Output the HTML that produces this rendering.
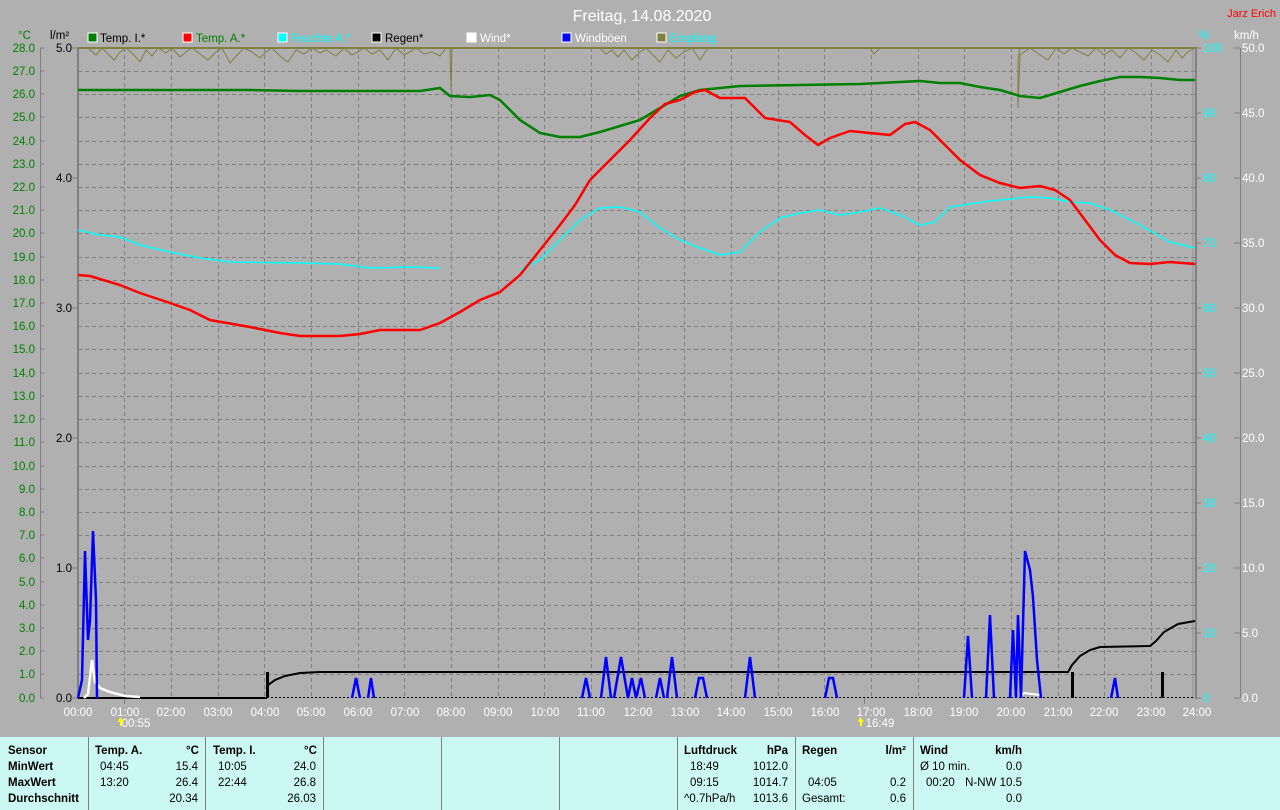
<!DOCTYPE html>
<html><head><meta charset="utf-8"><style>
body{margin:0;width:1280px;height:810px;background:#b0b0b0;overflow:hidden;font-family:"Liberation Sans",sans-serif;}
svg{position:absolute;left:0;top:0}
#tbl{position:absolute;left:0;top:737px;width:1280px;height:73px;background:#ccf8f4;font-size:11.5px;color:#000}
.c{position:absolute;top:0;height:73px;border-left:1px solid #808080}
.t{position:absolute;white-space:nowrap}
.b{font-weight:bold}
</style></head><body>
<svg width="1280" height="737" font-family="Liberation Sans, sans-serif" font-size="11.5">
<text x="642" y="21" fill="#fff" font-size="16" text-anchor="middle">Freitag, 14.08.2020</text>
<text x="1276" y="17" fill="#f00" font-size="11" text-anchor="end">Jarz Erich</text>
<!-- legend -->
<g font-size="11.5">
<rect x="88" y="33" width="9" height="9" fill="#008000" stroke="#fff"/><text x="100" y="42" fill="#000">Temp. I.*</text>
<rect x="183" y="33" width="9" height="9" fill="#f00" stroke="#fff"/><text x="196" y="42" fill="#008000">Temp. A.*</text>
<rect x="278" y="33" width="9" height="9" fill="#0ff" stroke="#fff"/><text x="291" y="42" fill="#0ff">Feuchte A.*</text>
<rect x="372" y="33" width="9" height="9" fill="#000" stroke="#fff"/><text x="385" y="42" fill="#000">Regen*</text>
<rect x="467" y="33" width="9" height="9" fill="#fff" stroke="#fff"/><text x="480" y="42" fill="#fff">Wind*</text>
<rect x="562" y="33" width="9" height="9" fill="#00f" stroke="#fff"/><text x="575" y="42" fill="#fff">Windböen</text>
<rect x="657" y="33" width="9" height="9" fill="#808040" stroke="#fff"/><text x="670" y="42" fill="#0ff">Empfang</text>
</g>
<text x="18" y="39" fill="#008000">°C</text>
<text x="50" y="39" fill="#000">l/m²</text>
<text x="1199" y="39" fill="#0ff">%</text>
<text x="1234" y="39" fill="#fff">km/h</text>
<!-- grid -->
<g stroke="#808080" stroke-dasharray="4,3" stroke-width="1">
<path d="M78 71.5H1197M78 94.5H1197M78 117.5H1197M78 141.5H1197M78 164.5H1197M78 187.5H1197M78 210.5H1197M78 233.5H1197M78 257.5H1197M78 280.5H1197M78 303.5H1197M78 326.5H1197M78 349.5H1197M78 373.5H1197M78 396.5H1197M78 419.5H1197M78 442.5H1197M78 466.5H1197M78 489.5H1197M78 512.5H1197M78 535.5H1197M78 558.5H1197M78 582.5H1197M78 605.5H1197M78 628.5H1197M78 651.5H1197M78 674.5H1197"/>
<path d="M124.5 48V698M171.5 48V698M218.5 48V698M264.5 48V698M311.5 48V698M358.5 48V698M404.5 48V698M451.5 48V698M498.5 48V698M544.5 48V698M591.5 48V698M638.5 48V698M684.5 48V698M731.5 48V698M778.5 48V698M824.5 48V698M871.5 48V698M918.5 48V698M964.5 48V698M1011.5 48V698M1058.5 48V698M1104.5 48V698M1151.5 48V698"/>
</g>
<!-- axes -->
<g stroke="#808080" stroke-width="1" fill="none">
<path d="M40.5 48V698M1240.5 48V698"/>
<path d="M40 48h4M40 71h4M40 94h4M40 117h4M40 141h4M40 164h4M40 187h4M40 210h4M40 233h4M40 257h4M40 280h4M40 303h4M40 326h4M40 349h4M40 373h4M40 396h4M40 419h4M40 442h4M40 466h4M40 489h4M40 512h4M40 535h4M40 558h4M40 582h4M40 605h4M40 628h4M40 651h4M40 674h4M40 698h4"/>
<path d="M72 48h6M72 178h6M72 308h6M72 438h6M72 568h6M72 698h6"/>
<path d="M1197 48h4M1197 113h4M1197 178h4M1197 243h4M1197 308h4M1197 373h4M1197 438h4M1197 503h4M1197 568h4M1197 633h4M1197 698h4"/>
<path d="M1234 48h6M1234 113h6M1234 178h6M1234 243h6M1234 308h6M1234 373h6M1234 438h6M1234 503h6M1234 568h6M1234 633h6M1234 698h6"/>
<path d="M124.5 698v6M864.5 698v6"/>
</g>
<path d="M78 47V699M1196 47V699" stroke="#808080" stroke-width="2"/>
<path d="M1193 47V699" stroke="#909090" stroke-width="1"/>
<path d="M78 48H1196" stroke="#808040" stroke-width="2"/>
<g fill="#008000" text-anchor="end">
<text x="35" y="52">28.0</text><text x="35" y="75">27.0</text><text x="35" y="98">26.0</text><text x="35" y="121">25.0</text><text x="35" y="145">24.0</text><text x="35" y="168">23.0</text><text x="35" y="191">22.0</text><text x="35" y="214">21.0</text><text x="35" y="237">20.0</text><text x="35" y="261">19.0</text><text x="35" y="284">18.0</text><text x="35" y="307">17.0</text><text x="35" y="330">16.0</text><text x="35" y="353">15.0</text><text x="35" y="377">14.0</text><text x="35" y="400">13.0</text><text x="35" y="423">12.0</text><text x="35" y="446">11.0</text><text x="35" y="470">10.0</text><text x="35" y="493">9.0</text><text x="35" y="516">8.0</text><text x="35" y="539">7.0</text><text x="35" y="562">6.0</text><text x="35" y="586">5.0</text><text x="35" y="609">4.0</text><text x="35" y="632">3.0</text><text x="35" y="655">2.0</text><text x="35" y="678">1.0</text><text x="35" y="702">0.0</text>
</g>
<g fill="#000" text-anchor="end">
<text x="72" y="52">5.0</text><text x="72" y="182">4.0</text><text x="72" y="312">3.0</text><text x="72" y="442">2.0</text><text x="72" y="572">1.0</text><text x="72" y="702">0.0</text>
</g>
<g fill="#0ff">
<text x="1203" y="52">100</text><text x="1203" y="117">90</text><text x="1203" y="182">80</text><text x="1203" y="247">70</text><text x="1203" y="312">60</text><text x="1203" y="377">50</text><text x="1203" y="442">40</text><text x="1203" y="507">30</text><text x="1203" y="572">20</text><text x="1203" y="637">10</text><text x="1203" y="702">0</text>
</g>
<g fill="#fff">
<text x="1242" y="52">50.0</text><text x="1242" y="117">45.0</text><text x="1242" y="182">40.0</text><text x="1242" y="247">35.0</text><text x="1242" y="312">30.0</text><text x="1242" y="377">25.0</text><text x="1242" y="442">20.0</text><text x="1242" y="507">15.0</text><text x="1242" y="572">10.0</text><text x="1242" y="637">5.0</text><text x="1242" y="702">0.0</text>
</g>
<g fill="#fff" text-anchor="middle">
<text x="78" y="716">00:00</text><text x="125" y="716">01:00</text><text x="171" y="716">02:00</text><text x="218" y="716">03:00</text><text x="265" y="716">04:00</text><text x="311" y="716">05:00</text><text x="358" y="716">06:00</text><text x="405" y="716">07:00</text><text x="451" y="716">08:00</text><text x="498" y="716">09:00</text><text x="545" y="716">10:00</text><text x="591" y="716">11:00</text><text x="638" y="716">12:00</text><text x="685" y="716">13:00</text><text x="731" y="716">14:00</text><text x="778" y="716">15:00</text><text x="825" y="716">16:00</text><text x="871" y="716">17:00</text><text x="918" y="716">18:00</text><text x="964" y="716">19:00</text><text x="1011" y="716">20:00</text><text x="1058" y="716">21:00</text><text x="1104" y="716">22:00</text><text x="1151" y="716">23:00</text><text x="1197" y="716">24:00</text>
<text x="136" y="727">00:55</text><text x="880" y="727">16:49</text>
</g>
<path d="M120 717l-2 5h2v4h2v-4h2z" fill="#ff0"/><path d="M860 717l-2 5h2v4h2v-4h2z" fill="#ff0"/>
<!-- Empfang -->
<polyline fill="none" stroke="#808040" stroke-width="1" points="88,48 96,55 102,48 108,54 114,60 120,52 126,48 134,55 140,62 146,50 152,56 158,48 166,53 172,48 180,57 186,52 192,48 200,54 208,60 216,52 222,48 230,63 238,54 244,48 252,52 260,58 266,52 272,48 280,56 288,62 296,50 304,54 312,48 320,53 326,50 336,56 344,48 352,55 358,52 364,48 372,54 380,50 388,60 396,48 404,55 410,52 416,48 424,54 432,52 440,56 446,48 450,48 451,90 452,48 460,48 600,48 606,54 612,50 618,57 624,50 632,60 640,52 646,48 654,56 660,62 668,50 676,58 684,52 692,48 700,60 708,48 760,48 850,48 870,48 874,54 880,48 1020,48 1018,60 1018,108 1020,55 1024,52 1030,48 1040,55 1048,60 1056,48 1064,54 1072,48 1080,52 1088,56 1096,48 1104,55 1112,50 1120,58 1128,48 1136,53 1144,60 1152,50 1160,55 1168,62 1176,50 1182,58 1188,52 1195,48"/>
<!-- humidity -->
<polyline fill="none" stroke="#0ff" stroke-width="1.5" points="78,230 100,235 120,237 140,245 170,252 200,258 230,262 300,263 340,264 370,268 410,267 440,268"/>
<polyline fill="none" stroke="#0ff" stroke-width="1.5" points="520,270 540,260 560,240 580,220 600,208 620,207 640,212 660,228 680,240 700,248 720,255 740,252 760,232 780,218 800,213 820,210 840,215 860,212 880,208 900,215 920,225 935,222 950,207 970,204 990,201 1010,199 1030,197 1050,198 1070,202 1090,203 1110,210 1140,225 1170,242 1195,248"/>
<!-- temp I -->
<polyline fill="none" stroke="#008000" stroke-width="2.5" points="78,90 250,90 300,91 420,91 440,88 450,96 470,97 490,95 500,100 520,120 540,133 560,137 580,137 600,132 620,126 640,120 660,108 680,96 700,90 740,86 800,85 860,84 900,82 920,81 940,83 960,83 980,87 1000,90 1020,96 1040,98 1060,92 1080,86 1100,81 1120,77 1140,77 1160,78 1180,80 1195,80"/>
<!-- temp A -->
<polyline fill="none" stroke="#f00" stroke-width="2.5" points="78,275 90,276 120,285 140,293 170,303 190,310 210,320 250,327 280,333 300,336 340,336 360,334 380,330 420,330 440,323 460,312 480,300 500,292 520,275 540,250 560,225 575,205 590,180 600,170 615,155 630,140 650,118 665,104 680,100 695,92 705,90 720,98 745,98 765,118 790,122 805,135 818,145 830,138 850,131 870,133 890,135 905,124 915,122 930,130 945,145 960,160 980,175 1000,183 1020,188 1040,186 1055,190 1070,200 1085,220 1100,240 1115,255 1130,263 1150,264 1170,262 1195,264"/>
<!-- baseline -->
<path d="M78 698H267" stroke="#000" stroke-width="2"/>
<path d="M267 697.5H1195" stroke="#fff" stroke-width="1" stroke-dasharray="2,2"/>
<path d="M269 697.5H1195" stroke="#000" stroke-width="1" stroke-dasharray="2,2" stroke-dashoffset="2"/>
<!-- rain -->
<polyline fill="none" stroke="#000" stroke-width="2" points="267,698 268,685 275,680 285,676 300,673 320,672 1068,672 1072,665 1080,656 1090,650 1100,647 1150,646 1156,641 1164,632 1178,624 1195,621"/>
<path d="M267.5 698V672M1072.5 698V672M1162.5 698V672" stroke="#000" stroke-width="3"/>
<!-- wind -->
<polyline fill="none" stroke="#fff" stroke-width="2.5" points="84,698 88,694 92,660 95,682 100,688 110,692 125,696 140,697"/>
<polyline fill="none" stroke="#fff" stroke-width="2" points="1020,697 1024,693 1032,694 1040,695"/>
<!-- gusts -->
<g fill="none" stroke="#00f" stroke-width="2.5">
<polyline points="78,698 82,680 85,551 88,640 90,620 93,531 96,600 97,698"/>
<polyline points="352,698 356,678 360,698"/><polyline points="368,698 371,678 374,698"/>
<polyline points="582,698 586,678 590,698"/><polyline points="601,698 606,657 611,698"/><polyline points="614,698 621,657 628,698 632,678 636,698 641,678 645,698"/>
<polyline points="656,698 660,678 664,698"/><polyline points="667,698 672,657 677,698"/><polyline points="695,698 699,678 703,678 707,698"/>
<polyline points="745,698 750,657 755,698"/><polyline points="825,698 829,678 833,678 837,698"/>
<polyline points="964,698 968,636 972,698"/><polyline points="986,698 990,615 994,698"/>
<polyline points="1010,698 1013,630 1016,698 1018,615 1021,698 1025,551 1030,570 1033,597 1037,660 1041,698"/>
<polyline points="1111,698 1115,678 1118,698"/>
</g>
</svg>
<div id="tbl">
<div class="c" style="left:88px"></div><div class="c" style="left:205px"></div><div class="c" style="left:323px"></div><div class="c" style="left:441px"></div><div class="c" style="left:559px"></div><div class="c" style="left:677px"></div><div class="c" style="left:795px"></div><div class="c" style="left:913px"></div>
<div class="t b" style="left:8px;top:8px">Sensor</div><div class="t b" style="left:8px;top:24px">MinWert</div><div class="t b" style="left:8px;top:40px">MaxWert</div><div class="t b" style="left:8px;top:56px">Durchschnitt</div>
<div class="t b" style="left:95px;top:8px">Temp. A.</div><div class="t b" style="left:186px;top:8px">°C</div>
<div class="t" style="left:100px;top:24px">04:45</div><div class="t" style="right:1082px;top:24px">15.4</div>
<div class="t" style="left:100px;top:40px">13:20</div><div class="t" style="right:1082px;top:40px">26.4</div>
<div class="t" style="right:1082px;top:56px">20.34</div>
<div class="t b" style="left:213px;top:8px">Temp. I.</div><div class="t b" style="left:304px;top:8px">°C</div>
<div class="t" style="left:218px;top:24px">10:05</div><div class="t" style="right:964px;top:24px">24.0</div>
<div class="t" style="left:218px;top:40px">22:44</div><div class="t" style="right:964px;top:40px">26.8</div>
<div class="t" style="right:964px;top:56px">26.03</div>
<div class="t b" style="left:684px;top:8px">Luftdruck</div><div class="t b" style="right:492px;top:8px">hPa</div>
<div class="t" style="left:690px;top:24px">18:49</div><div class="t" style="right:492px;top:24px">1012.0</div>
<div class="t" style="left:690px;top:40px">09:15</div><div class="t" style="right:492px;top:40px">1014.7</div>
<div class="t" style="left:684px;top:56px">^0.7hPa/h</div><div class="t" style="right:492px;top:56px">1013.6</div>
<div class="t b" style="left:802px;top:8px">Regen</div><div class="t b" style="right:374px;top:8px">l/m²</div>
<div class="t" style="left:808px;top:40px">04:05</div><div class="t" style="right:374px;top:40px">0.2</div>
<div class="t" style="left:802px;top:56px">Gesamt:</div><div class="t" style="right:374px;top:56px">0.6</div>
<div class="t b" style="left:920px;top:8px">Wind</div><div class="t b" style="right:258px;top:8px">km/h</div>
<div class="t" style="left:920px;top:24px">Ø 10 min.</div><div class="t" style="right:258px;top:24px">0.0</div>
<div class="t" style="left:926px;top:40px">00:20</div><div class="t" style="right:258px;top:40px">N-NW 10.5</div>
<div class="t" style="right:258px;top:56px">0.0</div>
</div>
</body></html>
